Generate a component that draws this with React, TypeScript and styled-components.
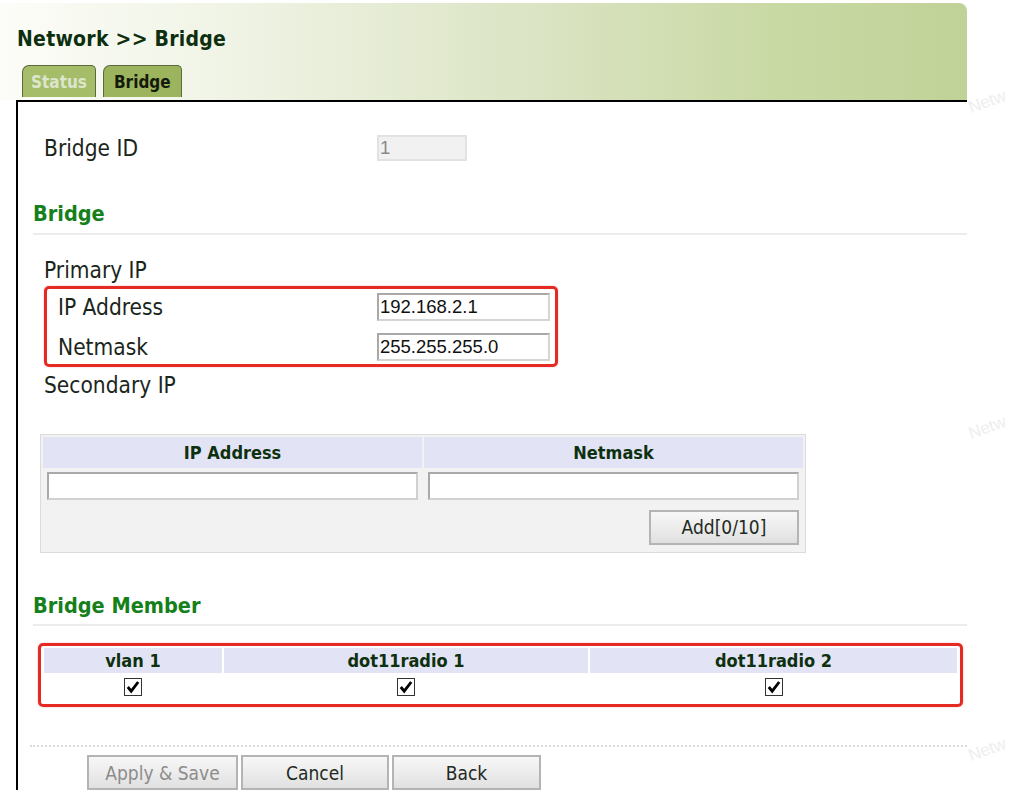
import React from "react";
import styled, { createGlobalStyle } from "styled-components";

const Global = createGlobalStyle`
  html, body { margin: 0; padding: 0; background: #ffffff; }
  body { font-family: "DejaVu Sans Condensed", "Liberation Sans", sans-serif; color: #1b261b; }
  * { box-sizing: border-box; }
`;

const Page = styled.div`
  position: relative;
  width: 1012px;
  height: 808px;
  overflow: hidden;
  padding-top: 3px;
`;

const Frame = styled.div`
  width: 967px;
`;

const Header = styled.div`
  height: 97px;
  padding: 22px 0 0 17px;
  border-top-right-radius: 8px;
  background: linear-gradient(to right, #fcfdf8 0%, #eff3e4 25%, #dbe4c4 55%, #c9d9a4 80%, #c1d298 100%);
  display: flex;
  flex-direction: column;
`;

const Title = styled.h1`
  margin: 0;
  font-size: 21px;
  line-height: 28px;
  font-weight: bold;
  letter-spacing: 0.25px;
  color: #0d2f0f;
`;

const TabRow = styled.div`
  display: flex;
  gap: 7px;
  margin-top: 12px;
  margin-left: 5px;
`;

const Tab = styled.div<{ $active?: boolean }>`
  height: 32px;
  padding: 0 ${(p) => (p.$active ? 10 : 8)}px;
  display: flex;
  align-items: center;
  background: ${(p) => (p.$active ? "#9cb45e" : "#a5bd69")};
  border: 1px solid #5b6b3c;
  border-bottom: none;
  border-radius: 7px 5px 0 0;
  font-size: 17px;
  font-weight: bold;
  color: ${(p) => (p.$active ? "#141a0c" : "#dde5cc")};
`;

const Panel = styled.div`
  margin-left: 16px;
  border-top: 2px solid #000;
  border-left: 2px solid #000;
  height: 690px;
  display: flex;
  flex-direction: column;
`;

const FieldRow = styled.div`
  display: flex;
  align-items: center;
  height: 26px;
  margin-top: 33px;
  padding-left: 26px;
`;

const Label = styled.div<{ $width: number }>`
  width: ${(p) => p.$width}px;
  font-size: 22.5px;
  color: #1b261b;
`;

const TextInput = styled.div<{ $width: number; $height: number; $disabled?: boolean }>`
  width: ${(p) => p.$width}px;
  height: ${(p) => p.$height}px;
  display: flex;
  align-items: center;
  padding-left: 1px;
  font-family: "Liberation Sans", sans-serif;
  font-size: 18.5px;
  color: ${(p) => (p.$disabled ? "#8a8a8a" : "#111")};
  background: ${(p) => (p.$disabled ? "#f1f1f1" : "#fff")};
  border: ${(p) => (p.$disabled ? "2px solid #e2e2e2" : "2px solid #a9a9a9")};
  border-right-color: ${(p) => (p.$disabled ? "#e2e2e2" : "#d4d4d4")};
  border-bottom-color: ${(p) => (p.$disabled ? "#e2e2e2" : "#d4d4d4")};
`;

const SectionTitle = styled.div<{ $top: number }>`
  margin-top: ${(p) => p.$top}px;
  margin-left: 15px;
  height: 37px;
  padding-top: 1px;
  line-height: 30px;
  font-size: 21.5px;
  font-weight: bold;
  color: #15801a;
  border-bottom: 2px solid #ececec;
`;

const SubLabel = styled.div<{ $top: number }>`
  margin-top: ${(p) => p.$top}px;
  padding-left: 26px;
  line-height: 22px;
  font-size: 22.5px;
  color: #1b261b;
`;

const RedBox = styled.div<{ $top: number; $left: number; $width: number; $pad: string }>`
  margin-top: ${(p) => p.$top}px;
  margin-left: ${(p) => p.$left}px;
  width: ${(p) => p.$width}px;
  border: 3px solid #e42a22;
  border-radius: 5px;
  padding: ${(p) => p.$pad};
  box-shadow: 0 0 2px rgba(228, 42, 34, 0.35);
`;

const BoxRows = styled.div`
  display: flex;
  flex-direction: column;
  gap: 12px;
`;

const BoxRow = styled.div`
  display: flex;
  align-items: center;
  height: 28px;
`;

const IpTable = styled.div`
  margin-top: 38px;
  margin-left: 22px;
  width: 766px;
  border: 1px solid #dcdcdc;
  background: #f2f2f2;
  padding: 2px;
  display: grid;
  grid-template-columns: 1fr 1fr;
  gap: 2px;
`;

const HeadCell = styled.div<{ $height: number }>`
  height: ${(p) => p.$height}px;
  background: #e3e3f6;
  display: flex;
  align-items: center;
  justify-content: center;
  font-size: 18px;
  font-weight: bold;
  color: #0d300e;
`;

const InputCell = styled.div`
  padding: 2px 4px 3px 4px;
  background: #f2f2f2;
`;

const FullInput = styled.div`
  height: 28px;
  background: #fff;
  border: 2px solid #a9a9a9;
  border-right-color: #d0d0d0;
  border-bottom-color: #d0d0d0;
`;

const ButtonCell = styled.div`
  grid-column: 1 / span 2;
  display: flex;
  justify-content: flex-end;
  padding: 5px 4px 5px 0;
`;

const Button = styled.button<{ $width: number; $height: number; $disabled?: boolean }>`
  width: ${(p) => p.$width}px;
  height: ${(p) => p.$height}px;
  padding: 0;
  border: 2px solid #b4b4b4;
  border-radius: 0;
  background: linear-gradient(to bottom, #f7f7f7 0%, #ebebeb 55%, #e0e0e0 100%);
  font-family: "DejaVu Sans Condensed", "Liberation Sans", sans-serif;
  font-size: 19px;
  color: ${(p) => (p.$disabled ? "#8c8c8c" : "#1f2a1f")};
`;

const MemberGrid = styled.div`
  display: grid;
  grid-template-columns: 178px 364px 1fr;
  column-gap: 2px;
`;

const CheckCell = styled.div`
  height: 28px;
  background: #fff;
  display: flex;
  align-items: center;
  justify-content: center;
`;

const CheckBox = styled.span`
  width: 18px;
  height: 18px;
  border: 1px solid #333;
  background: #fff;
  display: flex;
  align-items: center;
  justify-content: center;
`;

const DottedRule = styled.div`
  margin-top: 38px;
  margin-left: 12px;
  border-top: 2px dotted #dadada;
`;

const ButtonBar = styled.div`
  display: flex;
  gap: 3px;
  margin-top: 8px;
  margin-left: 69px;
`;

const Watermark = styled.div<{ $x: number; $y: number }>`
  position: absolute;
  left: ${(p) => p.$x}px;
  top: ${(p) => p.$y}px;
  font-family: "Liberation Sans", sans-serif;
  font-size: 17px;
  color: #eeeeee;
  transform: rotate(-20deg);
  pointer-events: none;
`;

const Check = () => (
  <CheckBox>
    <svg width="14" height="14" viewBox="0 0 14 14">
      <path d="M1.8 7 L5.2 11.2 L12.2 2" fill="none" stroke="#000" strokeWidth="2.8" strokeLinejoin="miter" />
    </svg>
  </CheckBox>
);

export default function App() {
  return (
    <Page>
      <Global />
      <Frame>
        <Header>
          <Title>Network &gt;&gt; Bridge</Title>
          <TabRow>
            <Tab>Status</Tab>
            <Tab $active>Bridge</Tab>
          </TabRow>
        </Header>
        <Panel>
          <FieldRow>
            <Label $width={333}>Bridge ID</Label>
            <TextInput $width={90} $height={26} $disabled>1</TextInput>
          </FieldRow>

          <SectionTitle $top={37}>Bridge</SectionTitle>

          <SubLabel $top={24}>Primary IP</SubLabel>
          <RedBox $top={5} $left={26} $width={514} $pad="4px 5px 3px 11px">
            <BoxRows>
              <BoxRow>
                <Label $width={319}>IP Address</Label>
                <TextInput $width={173} $height={28}>192.168.2.1</TextInput>
              </BoxRow>
              <BoxRow>
                <Label $width={319}>Netmask</Label>
                <TextInput $width={173} $height={28}>255.255.255.0</TextInput>
              </BoxRow>
            </BoxRows>
          </RedBox>
          <SubLabel $top={7}>Secondary IP</SubLabel>

          <IpTable>
            <HeadCell $height={31}>IP Address</HeadCell>
            <HeadCell $height={31}>Netmask</HeadCell>
            <InputCell><FullInput /></InputCell>
            <InputCell><FullInput /></InputCell>
            <ButtonCell>
              <Button $width={150} $height={35}>Add[0/10]</Button>
            </ButtonCell>
          </IpTable>

          <SectionTitle $top={37}>Bridge Member</SectionTitle>

          <RedBox $top={17} $left={20} $width={925} $pad="2px 3px 3px 3px">
            <MemberGrid>
              <HeadCell $height={25}>vlan 1</HeadCell>
              <HeadCell $height={25}>dot11radio 1</HeadCell>
              <HeadCell $height={25}>dot11radio 2</HeadCell>
              <CheckCell><Check /></CheckCell>
              <CheckCell><Check /></CheckCell>
              <CheckCell><Check /></CheckCell>
            </MemberGrid>
          </RedBox>

          <DottedRule />
          <ButtonBar>
            <Button $width={151} $height={35} $disabled>Apply &amp; Save</Button>
            <Button $width={148} $height={35}>Cancel</Button>
            <Button $width={149} $height={35}>Back</Button>
          </ButtonBar>
        </Panel>
      </Frame>
      <Watermark $x={968} $y={92}>Netw</Watermark>
      <Watermark $x={968} $y={418}>Netw</Watermark>
      <Watermark $x={968} $y={740}>Netw</Watermark>
    </Page>
  );
}
